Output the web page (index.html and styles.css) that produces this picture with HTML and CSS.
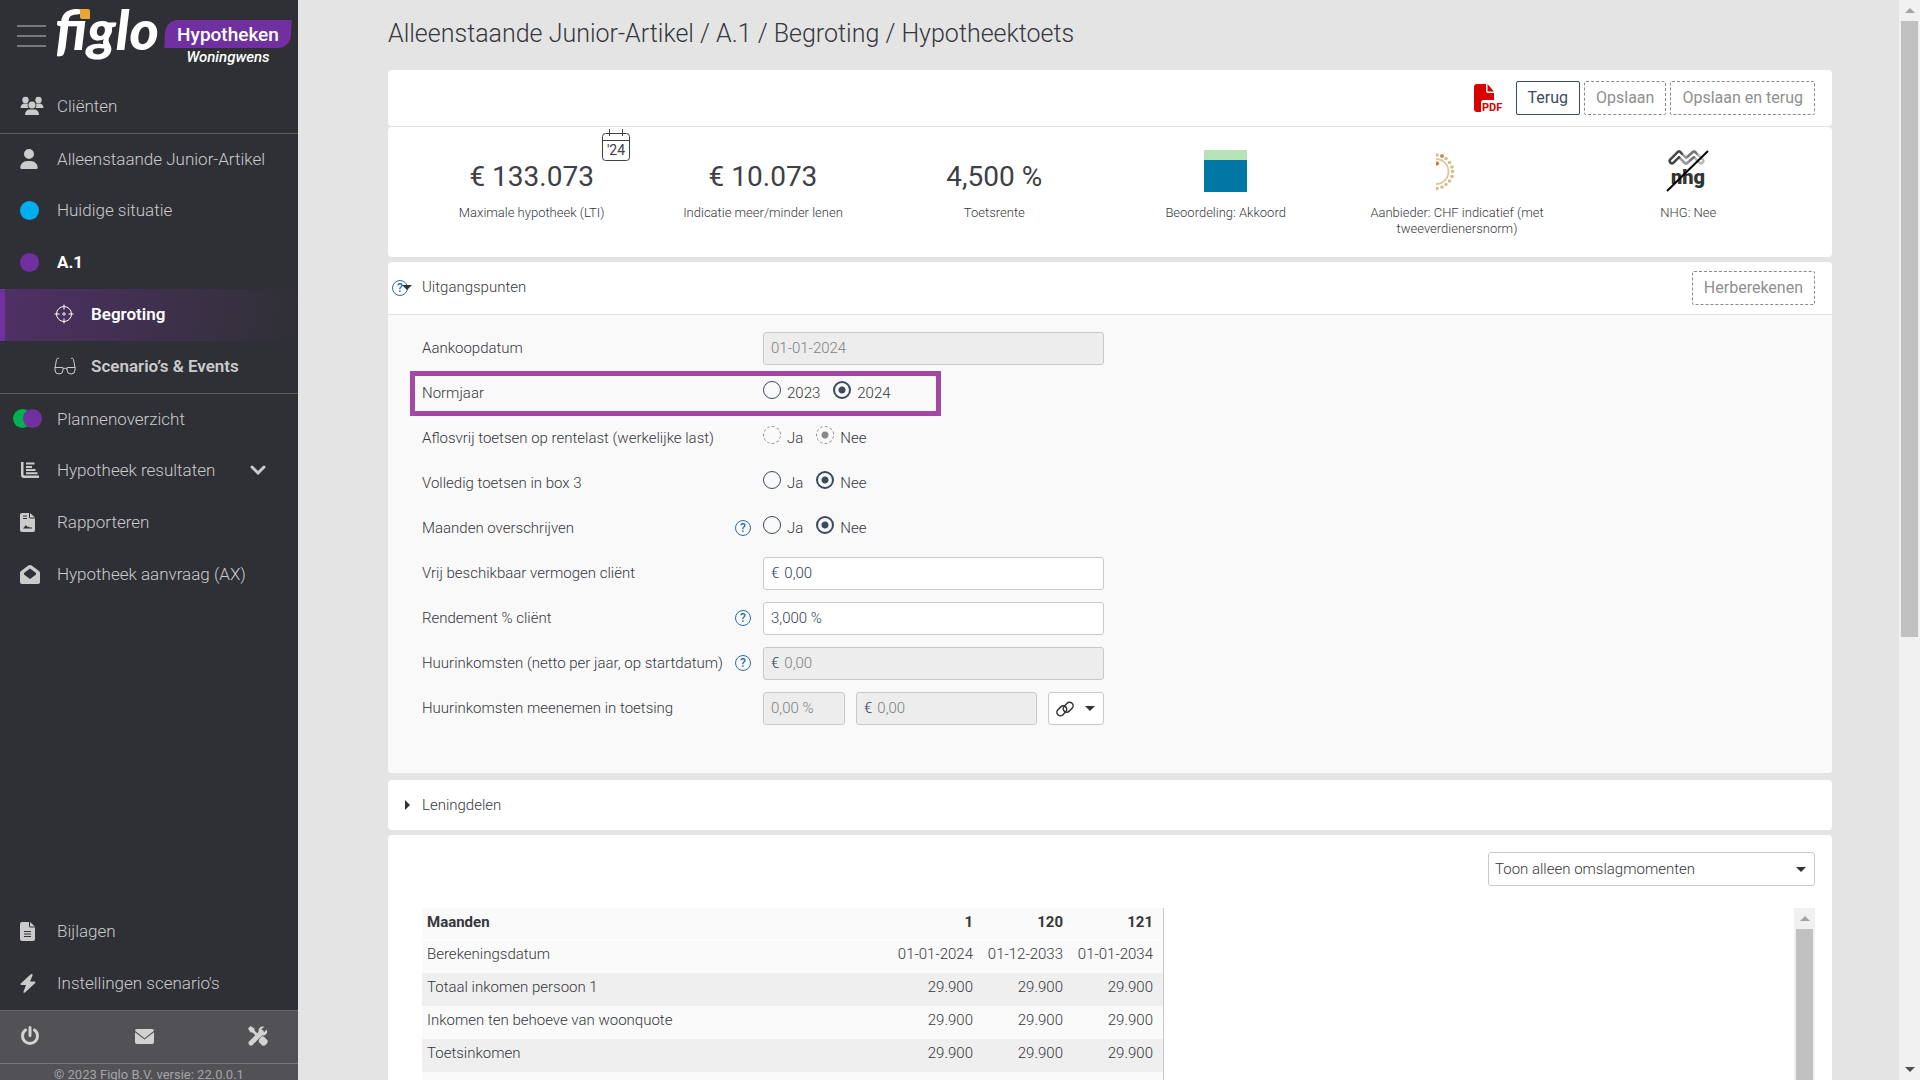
FILE: index.html
```html
<!DOCTYPE html>
<html lang="nl">
<head>
  <meta charset="UTF-8">
  <title>Hypotheektoets</title>
  <link rel="stylesheet" href="styles.css">
</head>
<body>
<aside class="sidebar">
  <div class="brand">
    <button class="menu-btn" aria-label="Menu"><span></span><span></span><span></span></button>
    <div class="logo">figlo<span class="logo-dot"></span></div>
    <div class="product">
      <div class="badge">Hypotheken</div>
      <div class="tagline">Woningwens</div>
    </div>
  </div>
  <nav class="nav">
    <a class="item" href="#">
      <span class="icon"><svg width="24" height="20" viewBox="0 0 24 20"><circle cx="5.500" cy="4" r="3.200"/><circle cx="18.500" cy="4" r="3.200"/><path d="M0.500 12c0-3 2-4.500 4-4.500h2c.7 0 1 .2 1.300.4-.4 1.700 0 3 .8 4.100zM23.500 12c0-3-2-4.500-4-4.500h-2c-.7 0-1 .2-1.300.4.4 1.700 0 3-.8 4.100z"/><circle cx="12" cy="9" r="3.500"/><path d="M5 19c0-3.500 2-5.500 5-5.500h4c3 0 5 2 5 5.500z"/></svg></span>
      Cliënten
    </a>
    <a class="item line" href="#">
      <span class="icon"><svg width="18" height="20" viewBox="0 0 448 512"><path d="M224 256A128 128 0 1 0 224 0a128 128 0 1 0 0 256zm-45.700 48C79.800 304 0 383.800 0 482.300C0 498.700 13.300 512 29.700 512H418.300c16.400 0 29.700-13.300 29.700-29.700C448 383.800 368.200 304 269.700 304H178.300z"/></svg></span>
      Alleenstaande Junior-Artikel
    </a>
    <a class="item" href="#"><span class="icon"><i class="dot blue"></i></span>Huidige situatie</a>
    <a class="item current" href="#"><span class="icon"><i class="dot purple"></i></span>A.1</a>
    <a class="item sub active" href="#">
      <span class="icon"><svg class="stroke" width="20" height="20" viewBox="0 0 20 20"><circle cx="10" cy="10" r="7.500"/><circle cx="10" cy="10" r="1.200"/><path d="M10 0.500v5M10 14.500v5M0.500 10h5M14.500 10h5"/></svg></span>
      Begroting
    </a>
    <a class="item sub" href="#">
      <span class="icon"><svg class="stroke" width="22" height="18" viewBox="0 0 22 18"><path d="M1 11L2.500 2.500C2.800 1.200 3.700 1 5 1.500M21 11L19.500 2.500c-.3-1.300-1.200-1.500-2.500-1M9 12c1.500-1 2.500-1 4 0M1 10.500h8v2.500a4 4 0 0 1-8 0zM13 10.500h8v2.500a4 4 0 0 1-8 0z"/></svg></span>
      Scenario’s &amp; Events
    </a>
    <a class="item line" href="#"><span class="icon pair"><i class="dot green"></i><i class="dot purple"></i></span>Plannenoverzicht</a>
    <a class="item" href="#">
      <span class="icon"><svg width="20" height="18" viewBox="0 0 20 18"><path d="M1 1h2.500v12.500q0 1 1 1H19V17H4q-3 0-3-3zM6 1.500h8.500v2H6zM6 5h6v2H6zM6 8h9.500v2H6zM6 11.300h11.500v2H6z"/></svg></span>
      Hypotheek resultaten
      <svg class="chevron" width="16" height="10" viewBox="0 0 16 10"><path d="M2 2l6 6 6-6"/></svg>
    </a>
    <a class="item" href="#">
      <span class="icon"><svg width="15" height="19" viewBox="0 0 15 19"><path fill-rule="evenodd" d="M2 0h7v4q0 1.500 1.500 1.500H15V17q0 2-2 2H2q-2 0-2-2V2q0-2 2-2zM10 0l5 4.500h-5zM3 2.500v1h4v-1zM3 5v1h4V5zM3 15.500h9v-1H9.500l-1-1-1 .5-1.500-2z"/></svg></span>
      Rapporteren
    </a>
    <a class="item" href="#">
      <span class="icon"><svg width="20" height="19" viewBox="0 0 20 19"><path fill-rule="evenodd" d="M10 0q1 0 2 .8L19 6q1 .8 1 2v9q0 2-2 2H2q-2 0-2-2V8q0-1.200 1-2L8 .8Q9 0 10 0zM10 3.500L4 8v1.500l6 4.500 6-4.500V8z"/></svg></span>
      Hypotheek aanvraag (AX)
    </a>
  </nav>
  <nav class="nav nav-bottom">
    <a class="item" href="#">
      <span class="icon"><svg width="15" height="19" viewBox="0 0 15 19"><path fill-rule="evenodd" d="M2 0h7v4q0 1.500 1.500 1.500H15V17q0 2-2 2H2q-2 0-2-2V2q0-2 2-2zM10 0l5 4.500h-5zM4 9v1h7V9zM4 11.500v1h7v-1zM4 14v1h7v-1z"/></svg></span>
      Bijlagen
    </a>
    <a class="item" href="#">
      <span class="icon"><svg width="16" height="19" viewBox="0 0 16 19"><path d="M11.500 0q1.500 0 1 1.500L10 7.500h4.500q1.500.3.700 1.500L5 18.500q-1.800 1-1.500-.8L6 11H1.500Q0 10.500.8 9.500L10.500.5z"/></svg></span>
      Instellingen scenario's
    </a>
  </nav>
  <div class="tools">
    <button aria-label="Uitloggen"><svg width="20" height="20" viewBox="0 0 20 20"><path class="power" d="M5.500 4a7.500 7.500 0 1 0 9 0M10 1.500v8"/></svg></button>
    <button aria-label="Berichten"><svg width="19" height="15" viewBox="0 0 19 15"><path d="M2 0h15q2 0 2 1.800L9.500 9.300 0 1.800Q0 0 2 0z"/><path d="M0 3.200V13q0 2 2 2h15q2 0 2-2V3.200L9.500 10.600z"/></svg></button>
    <button aria-label="Hulpmiddelen"><svg width="20" height="20" viewBox="0 0 20 20"><path class="wrench" d="M3 17L13.500 6.500"/><path d="M18.800 3.500l-3 3-2.300-.4-.4-2.300 3-3C13 0 10.500 2 10.500 5q0 4.500 4.500 4.500c3 0 5-2.500 3.800-6z"/><path d="M0 2.500L2.500 0l4 2.500v2L11 9l-2 2-4.500-4.500h-2zM11 13.500l2.500-3q2-.5 3 .8l2.700 2.700q1.200 1.500 0 3.200l-2 2q-1.700 1.200-3.200 0L11.300 16.500q-.8-1-.3-3z"/></svg></button>
  </div>
  <div class="copyright">© 2023 Figlo B.V. versie: 22.0.0.1</div>
</aside>

<main class="main">
  <h1 class="title">Alleenstaande Junior-Artikel / A.1 / Begroting / Hypotheektoets</h1>

  <section class="panel toolbar">
    <button class="pdf" aria-label="PDF"><svg width="30" height="30" viewBox="0 0 30 30"><path d="M3 1h9v7q0 2 2 2h6v7H10q-3 0-3 3v9H3q-3 0-3-3V4q0-3 3-3zM13.500 1L20 8.500h-6.500z"/><text x="8" y="28">PDF</text></svg></button>
    <button class="btn">Terug</button>
    <button class="btn" disabled>Opslaan</button>
    <button class="btn" disabled>Opslaan en terug</button>
  </section>

  <section class="panel metrics">
    <div class="metric">
      <div class="value">€ 133.073
        <svg class="calendar" width="30" height="34" viewBox="0 0 30 34"><path d="M4.500 5.500h21q3 0 3 3v21q0 3-3 3h-21q-3 0-3-3v-21q0-3 3-3zM1.500 12.500h27M8.500 1v7M21.500 1v7"/><text x="15" y="27">'24</text></svg>
      </div>
      <div class="caption">Maximale hypotheek (LTI)</div>
    </div>
    <div class="metric">
      <div class="value">€ 10.073</div>
      <div class="caption">Indicatie meer/minder lenen</div>
    </div>
    <div class="metric">
      <div class="value">4,500 %</div>
      <div class="caption">Toetsrente</div>
    </div>
    <div class="metric">
      <div class="value"><span class="score"></span></div>
      <div class="caption">Beoordeling: Akkoord</div>
    </div>
    <div class="metric">
      <div class="value"><svg width="42" height="42" viewBox="16 0 42 42"><g fill="#d5bd8c"><circle cx="17" cy="5" r="1.800"/><circle cx="22" cy="6" r="2" fill="#b8935a"/><circle cx="26" cy="8.500" r="1.800"/><circle cx="29.500" cy="12.500" r="1.800"/><circle cx="32" cy="17" r="1.800"/><circle cx="32.500" cy="21.500" r="1.800"/><circle cx="32" cy="26.500" r="1.800"/><circle cx="29.500" cy="31" r="1.800"/><circle cx="26" cy="34.500" r="1.800"/><circle cx="22" cy="37" r="1.800"/><circle cx="17" cy="38.500" r="1.800"/></g><path d="M16 9a12.500 12.500 0 0 1 0 25" fill="none" stroke="#dcc9a2" stroke-width="1.800"/><circle cx="17" cy="13.500" r="2" fill="#f26a21"/></svg></div>
      <div class="caption">Aanbieder: CHF indicatief (met tweeverdienersnorm)</div>
    </div>
    <div class="metric">
      <div class="value"><svg width="44" height="42" viewBox="0 0 44 42"><g fill="none" stroke-width="7" stroke-linecap="round"><path d="M35 11l-7-7" stroke="#bbb"/><path d="M20 11l8-7" stroke="#777"/><path d="M13 4l7 7" stroke="#999"/><path d="M6 11l7-7" stroke="#444"/></g><path d="M6 11l7-7 7 7 8-7 7 7" fill="none" stroke="#fff" stroke-width="2" stroke-linecap="round"/><text class="nhg" x="22" y="34">nhg</text><path d="M1 41L42 1" stroke="#000" stroke-width="2"/></svg></div>
      <div class="caption">NHG: Nee</div>
    </div>
  </section>

  <section class="panel group">
    <header class="group-head">
      <button class="help head-help" aria-label="Help">?</button>
      <span class="caret down"></span>
      <h2>Uitgangspunten</h2>
      <button class="btn" disabled>Herberekenen</button>
    </header>
    <form class="form">
      <div class="row">
        <label for="aankoop">Aankoopdatum</label>
        <div class="field"><input class="input" id="aankoop" type="text" value="01-01-2024" disabled></div>
      </div>
      <div class="row marked" role="radiogroup" aria-labelledby="normjaar">
        <span class="label" id="normjaar">Normjaar</span>
        <div class="field radios">
          <label><input type="radio" name="normjaar">2023</label>
          <label><input type="radio" name="normjaar" checked>2024</label>
        </div>
      </div>
      <div class="row" role="radiogroup" aria-labelledby="aflosvrij">
        <span class="label" id="aflosvrij">Aflosvrij toetsen op rentelast (werkelijke last)</span>
        <div class="field radios">
          <label><input type="radio" name="aflosvrij" disabled>Ja</label>
          <label><input type="radio" name="aflosvrij" checked disabled>Nee</label>
        </div>
      </div>
      <div class="row" role="radiogroup" aria-labelledby="box3">
        <span class="label" id="box3">Volledig toetsen in box 3</span>
        <div class="field radios">
          <label><input type="radio" name="box3">Ja</label>
          <label><input type="radio" name="box3" checked>Nee</label>
        </div>
      </div>
      <div class="row" role="radiogroup" aria-labelledby="maanden">
        <span class="label" id="maanden">Maanden overschrijven</span>
        <button type="button" class="help" aria-label="Help">?</button>
        <div class="field radios">
          <label><input type="radio" name="maanden">Ja</label>
          <label><input type="radio" name="maanden" checked>Nee</label>
        </div>
      </div>
      <div class="row">
        <label for="vermogen">Vrij beschikbaar vermogen cliënt</label>
        <div class="field"><div class="money">€<input id="vermogen" type="text" value="0,00"></div></div>
      </div>
      <div class="row">
        <label for="rendement">Rendement % cliënt</label>
        <button type="button" class="help" aria-label="Help">?</button>
        <div class="field"><input class="input" id="rendement" type="text" value="3,000 %"></div>
      </div>
      <div class="row">
        <label for="huur">Huurinkomsten (netto per jaar, op startdatum)</label>
        <button type="button" class="help" aria-label="Help">?</button>
        <div class="field"><div class="money off">€<input id="huur" type="text" value="0,00" disabled></div></div>
      </div>
      <div class="row">
        <label for="toetsing">Huurinkomsten meenemen in toetsing</label>
        <div class="field">
          <input class="input percent" id="toetsing" type="text" value="0,00 %" disabled>
          <div class="money off">€<input type="text" value="0,00" aria-label="Bedrag" disabled></div>
          <button type="button" class="link-btn" aria-label="Koppeling">
            <svg width="20" height="18" viewBox="0 0 20 18"><g transform="rotate(-45 10 9)"><rect x="1" y="4.500" width="11" height="7" rx="3.500"/><rect x="8" y="6.500" width="11" height="7" rx="3.500"/></g></svg>
            <span class="caret down"></span>
          </button>
        </div>
      </div>
    </form>
  </section>

  <section class="panel closed">
    <span class="caret right"></span>
    <h2>Leningdelen</h2>
  </section>

  <section class="panel results">
    <div class="filter">
      <select aria-label="Weergave"><option>Toon alleen omslagmomenten</option></select>
      <span class="caret down"></span>
    </div>
    <div class="scroller">
      <table class="table">
        <thead>
          <tr><th>Maanden</th><th>1</th><th>120</th><th>121</th></tr>
        </thead>
        <tbody>
          <tr><td>Berekeningsdatum</td><td>01-01-2024</td><td>01-12-2033</td><td>01-01-2034</td></tr>
          <tr><td>Totaal inkomen persoon 1</td><td>29.900</td><td>29.900</td><td>29.900</td></tr>
          <tr><td>Inkomen ten behoeve van woonquote</td><td>29.900</td><td>29.900</td><td>29.900</td></tr>
          <tr><td>Toetsinkomen</td><td>29.900</td><td>29.900</td><td>29.900</td></tr>
          <tr><td>Toetsrente</td><td>4,500 %</td><td></td><td></td></tr>
        </tbody>
      </table>
      <div class="scrollbar"><span class="arrow up"></span><span class="thumb"></span></div>
    </div>
  </section>
</main>

<div class="scrollbar page-scroll"><span class="arrow up"></span><span class="thumb"></span><span class="arrow down"></span></div>
</body>
</html>
```
FILE: styles.css
```css
*, *:before, *:after{
  box-sizing: border-box;
}
body{
  display: flex;
  height: 100vh;
  margin: 0;
  overflow: hidden;
  background-color: #e4e4e4;
  color: #36373c;
  font-family: Roboto, "Liberation Sans", sans-serif;
  font-size: 15px;
  font-weight: 300;
}
button, input, select{
  font: inherit;
  color: inherit;
}
button{
  padding: 0;
  border: 0;
  background: none;
}
h1, h2{
  margin: 0;
  font-weight: 300;
}

/* sidebar */
.sidebar{
  display: flex;
  flex-direction: column;
  flex: none;
  width: 298px;
  background-color: #2f3035;
  color: #cbcbcb;
}
.brand{
  display: flex;
  flex: none;
  height: 81px;
  padding: 0 7px 0 17px;
}
.menu-btn{
  display: flex;
  flex-direction: column;
  gap: 8px;
  width: 29px;
  height: 24px;
  margin: 25px 9px 0 0;
}
.menu-btn span{
  width: 29px;
  height: 2px;
  background-color: #77787b;
}
.logo{
  position: relative;
  width: 110px;
  color: #fff;
  font-family: Lato, sans-serif;
  font-size: 56px;
  font-weight: 900;
  font-style: italic;
  line-height: 58px;
}
.logo-dot{
  position: absolute;
  top: 9px;
  left: 25px;
  width: 10px;
  height: 10px;
  background-color: #e9a634;
  border-radius: 0 2px 0 2px;
}
.product{
  flex: 1;
  padding-top: 20px;
  color: #fff;
  text-align: center;
}
.badge{
  position: relative;
  z-index: 0;
  height: 28px;
  font-size: 19px;
  font-weight: 500;
  line-height: 29px;
}
.badge:before{
  content: '';
  position: absolute;
  inset: 0;
  z-index: -1;
  background-color: #7030a0;
  border-radius: 12px 0 12px 0;
  transform: skewX(-3deg);
}
.tagline{
  font-size: 15px;
  font-weight: 500;
  font-style: italic;
  line-height: 18px;
}
.nav-bottom{
  margin-top: auto;
}
.item{
  display: flex;
  align-items: center;
  height: 52px;
  padding: 0 0 2px 20px;
  color: inherit;
  font-size: 17px;
  text-decoration: none;
}
.line{
  border-top: 1px solid #5b5c60;
}
.icon{
  display: flex;
  flex: none;
  width: 37px;
  fill: #cbcbcb;
}
.stroke{
  fill: none;
  stroke: currentColor;
}
.chevron{
  margin-left: 35px;
  fill: none;
  stroke: #cbcbcb;
  stroke-width: 3;
  stroke-linecap: round;
}
.dot{
  width: 19px;
  height: 19px;
  border-radius: 50%;
}
.pair{
  width: 44px;
  margin-left: -7px;
}
.pair .dot + .dot{
  margin-left: -9px;
}
.blue{
  background-color: #00aeef;
}
.purple{
  background-color: #7030a0;
}
.green{
  background-color: #00b050;
}
.current{
  color: #fff;
  font-weight: 700;
}
.sub{
  padding-left: 54px;
  font-weight: 600;
}
.active{
  padding-left: 49px;
  border-left: 5px solid #7030a0;
  background: linear-gradient(100deg, #4f3065, #2f3035);
  color: #fff;
}
.tools{
  display: flex;
  flex: none;
  justify-content: space-between;
  height: 54px;
  padding: 2px 30px 0 20px;
  border-top: 1px solid #66676a;
  border-bottom: 1px solid #77787b;
  background-color: #515156;
  fill: #d2d2d2;
}
.power, .wrench{
  fill: none;
  stroke: #d2d2d2;
  stroke-width: 3;
  stroke-linecap: round;
}
.wrench{
  stroke-width: 5;
}
.copyright{
  flex: none;
  height: 16px;
  background-color: #515156;
  color: #a5a5a7;
  font-size: 13px;
  font-weight: 400;
  line-height: 21px;
  text-align: center;
}

/* content */
.main{
  flex: 1;
  min-width: 0;
  padding: 0 67px 0 90px;
}
.title{
  height: 70px;
  font-size: 25px;
  line-height: 67px;
}
.panel{
  margin-bottom: 5px;
  border-radius: 4px;
  background-color: #fff;
}
.toolbar{
  display: flex;
  align-items: center;
  justify-content: flex-end;
  gap: 4px;
  height: 56px;
  margin-bottom: 1px;
  padding-right: 17px;
}
.pdf{
  margin-right: 8px;
  fill: #d80000;
}
.pdf svg{
  display: block;
}
.pdf text{
  font-size: 11px;
  font-weight: 700;
}
.btn{
  height: 34px;
  padding: 0 11px 2px;
  border: 1px solid #3b4a5f;
  border-radius: 2px;
  background-color: #fff;
  color: #3b4a5f;
  font-size: 16px;
  font-weight: 400;
}
.btn:disabled{
  border: 1px dashed #8a8a8a;
  color: #8f8f8f;
}
.metrics{
  display: grid;
  grid-template-columns: repeat(6, 1fr);
  height: 130px;
  padding: 23px 28px 0;
  text-align: center;
}
.metric{
  padding: 0 20px;
}
.value{
  position: relative;
  display: flex;
  align-items: flex-end;
  justify-content: center;
  height: 42px;
  color: #3f4045;
  font-size: 28px;
  font-weight: 400;
  line-height: 30px;
}
.calendar{
  position: absolute;
  top: -22px;
  left: 165px;
  fill: none;
  stroke: #3f4045;
}
.calendar text{
  fill: #3f4045;
  stroke: none;
  font-size: 14px;
  text-anchor: middle;
}
.nhg{
  fill: #333;
  font-size: 20px;
  font-weight: 900;
  text-anchor: middle;
}
.caption{
  margin-top: 13px;
  font-size: 13px;
  line-height: 16px;
}
.score{
  width: 43px;
  height: 42px;
  border-top: 10px solid #b8e2b8;
  background-color: #0077a5;
}
h2{
  font-size: 15px;
}
.caret{
  flex: none;
  width: 0;
  height: 0;
  border: 5px solid transparent;
}
.caret.down{
  border-top-color: #333;
  border-bottom-width: 0;
}
.caret.right{
  border-left-color: #333;
  border-right-width: 0;
}
.group-head{
  display: flex;
  align-items: center;
  height: 53px;
  padding: 0 17px 0 4px;
  border-bottom: 1px solid #e1e1e1;
}
.group-head h2{
  padding-bottom: 2px;
}
.group-head .btn{
  margin-left: auto;
}
.group-head .caret{
  margin: 0 10px 2px -6px;
}
.help{
  flex: none;
  width: 16px;
  height: 16px;
  border: 1px solid #2a6ea8;
  border-radius: 50%;
  color: #2a6ea8;
  font-size: 12px;
  font-weight: 500;
  line-height: 14px;
}
.form{
  display: flex;
  flex-direction: column;
  gap: 12px;
  padding: 17px 34px 48px;
  border-radius: 0 0 4px 4px;
  background-color: #f9f9f9;
}
.row{
  position: relative;
  display: flex;
  align-items: center;
  height: 33px;
}
.row > label, .label{
  width: 341px;
  padding-bottom: 2px;
}
.row .help{
  margin: 0 12px 2px -28px;
}
.marked:after{
  content: '';
  position: absolute;
  top: -6px;
  bottom: -6px;
  left: -12px;
  width: 531px;
  border: 5px solid #a349a4;
}
.field{
  display: flex;
  gap: 11px;
  width: 341px;
}
.input, .money{
  display: flex;
  flex: 1;
  align-items: center;
  gap: 5px;
  min-width: 0;
  height: 33px;
  padding: 0 7px 1px;
  border: 1px solid #c9c9c9;
  border-radius: 3px;
  background-color: #fff;
  color: #334155;
}
.input:disabled, .off{
  background-color: #ededed;
}
input:disabled{
  color: #808080;
}
.money input{
  flex: 1;
  min-width: 0;
  padding: 0;
  border: 0;
  background: none;
}
.percent{
  flex: none;
  width: 82px;
}
.radios{
  gap: 13px;
}
.radios label{
  display: flex;
  align-items: center;
  gap: 6px;
  padding-bottom: 2px;
}
.radios input{
  width: 18px;
  height: 18px;
  margin: 0 0 5px;
  border: 1px solid #3b4a5f;
  border-radius: 50%;
  appearance: none;
}
.radios input:checked{
  border-width: 2px;
  background: radial-gradient(circle, #3b4a5f 3px, transparent 4px);
}
.radios input:disabled{
  border: 1px dashed #8a8a8a;
}
.radios input:checked:disabled{
  background: radial-gradient(circle, #8a8a8a 3px, transparent 4px);
}
.link-btn{
  display: flex;
  align-items: center;
  justify-content: space-between;
  width: 56px;
  padding: 0 8px 0 6px;
  border: 1px solid #c9c9c9;
  border-radius: 3px;
  background-color: #fff;
}
.link-btn svg{
  fill: none;
  stroke: #333;
  stroke-width: 1.5;
}
.closed{
  display: flex;
  align-items: center;
  gap: 12px;
  height: 50px;
  margin-top: 7px;
  padding-left: 17px;
}
.results{
  padding: 17px 17px 0 34px;
}
.filter{
  position: relative;
  width: 327px;
  margin: 0 0 22px auto;
}
.filter select{
  width: 100%;
  height: 34px;
  padding: 0 6px;
  border: 1px solid #c9c9c9;
  border-radius: 3px;
  background-color: #fff;
  appearance: none;
}
.filter .caret{
  position: absolute;
  top: 15px;
  right: 9px;
}
.scroller{
  display: flex;
  justify-content: space-between;
}
.table{
  width: 742px;
  border-right: 1px solid #c9c9c9;
  border-spacing: 0;
  table-layout: fixed;
}
.table th, .table td{
  width: 90px;
  height: 33px;
  padding: 0 10px 6px 0;
  background-color: #fafafa;
  text-align: right;
}
.table th{
  height: 32px;
  padding-bottom: 3px;
  border-bottom: 1px solid #fff;
  font-weight: 700;
}
.table th:first-child, .table td:first-child{
  width: auto;
  padding-left: 5px;
  text-align: left;
}
.table tbody tr:nth-child(even) td{
  background-color: #efefef;
}

/* scrollbars */
.scrollbar{
  display: flex;
  flex-direction: column;
  align-items: center;
  flex: none;
  width: 21px;
  background-color: #f1f1f1;
}
.arrow{
  flex: none;
  margin: 8px 0;
  border: 5px solid transparent;
}
.arrow.up{
  border-top-width: 0;
  border-bottom-color: #a3a3a3;
}
.arrow.down{
  margin-top: auto;
  border-bottom-width: 0;
  border-top-color: #505050;
}
.thumb{
  width: 17px;
  height: 100%;
  background-color: #c1c1c1;
}
.page-scroll .thumb{
  height: 57%;
}
```
